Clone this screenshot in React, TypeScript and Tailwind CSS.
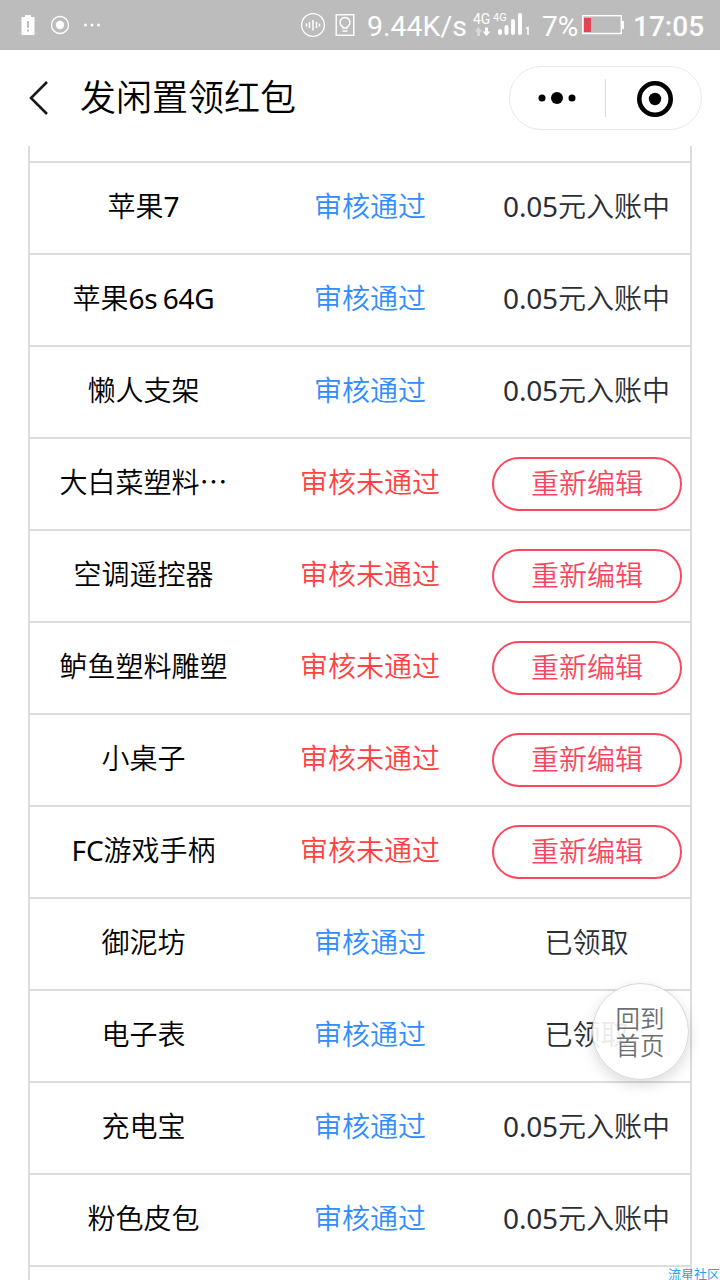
type Item = {
  name: string;
  status: "pass" | "fail";
  action: string;
};

const pending = "0.05元入账中";

const items: Item[] = [
  { name: "苹果7", status: "pass", action: pending },
  { name: "苹果6s 64G", status: "pass", action: pending },
  { name: "懒人支架", status: "pass", action: pending },
  { name: "大白菜塑料…", status: "fail", action: "重新编辑" },
  { name: "空调遥控器", status: "fail", action: "重新编辑" },
  { name: "鲈鱼塑料雕塑", status: "fail", action: "重新编辑" },
  { name: "小桌子", status: "fail", action: "重新编辑" },
  { name: "FC游戏手柄", status: "fail", action: "重新编辑" },
  { name: "御泥坊", status: "pass", action: "已领取" },
  { name: "电子表", status: "pass", action: "已领取" },
  { name: "充电宝", status: "pass", action: pending },
  { name: "粉色皮包", status: "pass", action: pending },
];

const StatusBar = () => {
  return (
    <header className="flex h-[50px] items-center bg-[#bcbcbc] font-['Roboto',sans-serif] text-white">
      <svg width="110" height="50" viewBox="0 0 110 50" fill="none">
        <path d="M21.500 17h3.500v-2h6v2h3.500v18h-13z" fill="#fff" />
        <path d="M28 21v7M28 29.500v2" stroke="#bcbcbc" strokeWidth="2" />
        <circle cx="60" cy="25" r="8.500" stroke="#fff" strokeWidth="1.300" />
        <circle cx="60" cy="25" r="4.200" fill="#fff" />
        <circle cx="85.500" cy="25" r="1.500" fill="#fff" />
        <circle cx="92" cy="25" r="1.500" fill="#fff" />
        <circle cx="98.500" cy="25" r="1.500" fill="#fff" />
      </svg>
      <svg className="ml-[188px] shrink-0" width="62" height="50" viewBox="298 0 62 50" fill="none" stroke="#fff">
        <circle cx="313" cy="25" r="11.400" strokeWidth="1.300" />
        <path
          d="M306.500 23.500v3M309.500 22v6M313 20v10.500M316.500 22v6M319.500 23.500v3"
          strokeWidth="1.500"
        />
        <rect x="336.200" y="14.700" width="17.600" height="20.600" strokeWidth="1.400" />
        <path d="M343 28v-1a5 5 0 1 1 4 0v1zM342.500 31h5" strokeWidth="1.500" />
      </svg>
      <span className="mt-[3px] ml-[7px] w-[105px] shrink-0 text-[28.500px] leading-[50px] font-normal whitespace-nowrap">
        9.44K/s
      </span>
      <div className="flex h-[50px] w-[58px] shrink-0 flex-col">
        <div className="mt-[10px] flex h-4 items-start pl-px font-normal">
          <span className="w-5 text-[14px] leading-[18px]">4G</span>
          <span className="text-[11px] leading-[15px]">4G</span>
        </div>
        <svg className="-mt-[14px] shrink-0" width="58" height="26" viewBox="472 12 58 26" fill="none">
          <path d="M477 36v-4.500h-2.200l3.700-4.500 3.700 4.500H480V36z" fill="#d8d8d8" />
          <path d="M485 27.500v4h-2.300l3.800 4.500 3.800-4.500H488v-4z" fill="#fff" />
          <path
            d="M500 31v2M506.500 27v6M513 21v12M520 15v18"
            stroke="#fff"
            strokeWidth="4"
            strokeLinecap="round"
          />
          <path d="M526 28.500l2-1V35" stroke="#fff" strokeWidth="1.500" />
        </svg>
      </div>
      <span className="mt-[3px] ml-3 w-[39px] shrink-0 text-[28px] leading-[50px] font-normal">7%</span>
      <svg className="shrink-0" width="44" height="50" viewBox="581 0 44 50" fill="none">
        <rect x="582.800" y="15.700" width="38.500" height="17.800" stroke="#fff" strokeWidth="1.400" />
        <path d="M584 18h7v14h-7z" fill="#e34353" />
        <path d="M621.500 21h2.500v8h-2.500z" fill="#fff" />
      </svg>
      <span className="mt-[3px] ml-2 text-[28px] leading-[50px] font-medium">17:05</span>
    </header>
  );
};

const TitleBar = () => {
  return (
    <div className="flex h-24 items-center pr-[18px] pl-7">
      <svg width="22" height="36" viewBox="28 80 22 36" fill="none">
        <path d="M47 82L31 98l16 16" stroke="#1a1a1a" strokeWidth="2.600" />
      </svg>
      <h1 className="ml-[30px] flex-1 text-[36px] leading-[50px]">发闲置领红包</h1>
      <div className="flex h-16 w-[193px] items-center rounded-full border border-[#e9e9e9]">
        <button className="flex w-[95px] justify-center pr-px">
          <svg width="38" height="12" viewBox="0 0 38 12">
            <circle cx="4" cy="6" r="3.500" />
            <circle cx="19" cy="6" r="6" />
            <circle cx="34" cy="6" r="3.500" />
          </svg>
        </button>
        <span className="h-[38px] w-px bg-[#dedede]" />
        <button className="flex flex-1 justify-center pt-[2px] pl-[3px]">
          <svg width="36" height="36" viewBox="0 0 36 36">
            <circle cx="18" cy="18" r="15.700" fill="none" stroke="#000" strokeWidth="4.600" />
            <circle cx="18" cy="18" r="6.200" />
          </svg>
        </button>
      </div>
    </div>
  );
};

// latin letters and digits need the regular weight to sit well next to the chinese text
const MixedText = ({ text }: { text: string }) => {
  return text.split(/([\w. ]+)/).map((part, i) =>
    i % 2 === 1 ? (
      <span key={i} className="tracking-[-0.2px] font-normal">
        {part}
      </span>
    ) : (
      part
    )
  );
};

const Row = ({ item }: { item: Item }) => {
  return (
    <li className="grid h-[92px] grid-cols-[227px_226px_1fr] items-center border-b-2 border-[#dddddd] text-center text-[28px] leading-10">
      {item.name.endsWith("…") ? (
        <span className="pb-[6px] font-['Noto_Sans_CJK_SC',sans-serif]">{item.name}</span>
      ) : (
        <span className="pb-1 [word-spacing:-2px]">
          <MixedText text={item.name} />
        </span>
      )}
      {item.status === "pass" ? (
        <span className="pb-1 text-[#318cfd]">审核通过</span>
      ) : (
        <span className="pb-1 text-[#ff4242]">审核未通过</span>
      )}
      {item.status === "pass" ? (
        <span className="pb-1 text-[#2b2e35]">
          <MixedText text={item.action} />
        </span>
      ) : (
        <button className="ml-[9px] h-[54px] w-[190px] rounded-[27px] border-2 border-[#fb465f] pb-[3px] text-[#fb465f]">
          {item.action}
        </button>
      )}
    </li>
  );
};

const App = () => {
  return (
    <div className="relative flex h-[1280px] w-[720px] flex-col overflow-hidden bg-white font-['Noto_Sans','Noto_Sans_CJK_SC',sans-serif] font-[350] text-black">
      <StatusBar />
      <TitleBar />
      <ul className="mx-7 flex-1 border-x-2 border-[#dddddd]">
        <li className="h-[17px] border-b-2 border-[#dddddd]" />
        {items.map((item) => (
          <Row key={item.name} item={item} />
        ))}
      </ul>
      <button className="absolute top-[983px] left-[592px] h-[97px] w-[97px] rounded-full border border-[#d6d6d6] bg-white/90 pt-px pr-px text-[24.500px] leading-[27px] text-[#6e6f73] shadow-[0_5px_14px_rgba(0,0,0,0.14)]">
        回到
        <br />
        首页
      </button>
      <span className="absolute right-0 bottom-[-2px] text-[13px] leading-4 font-normal text-[#2f9df4]">
        流星社区
      </span>
    </div>
  );
};

export default App;
